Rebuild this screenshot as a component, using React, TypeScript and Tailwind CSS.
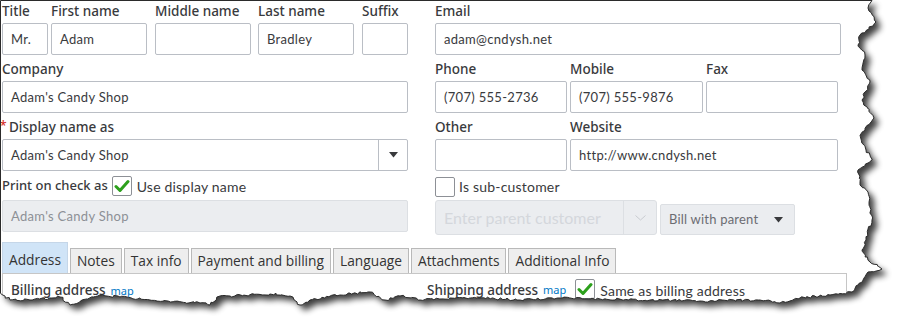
import { useMemo } from "react";

const labelCls =
  "block h-[23px] pt-[2px] font-['Noto_Sans',sans-serif] text-[13.5px] leading-[18px] font-medium text-[#393a3d]";
const inputCls =
  "h-[32px] rounded-[2px] border border-[#babec5] bg-white px-[8px] text-[13px] tracking-[0.3px] leading-[30px] text-[#393a3d]";

function Field({ label, value, w, className = "" }: { label: string; value?: string; w: string; className?: string }) {
  return (
    <div className={className}>
      <span className={labelCls}>{label}</span>
      <div className={`${inputCls} ${w}`}>{value}</div>
    </div>
  );
}

function CheckBox({ checked }: { checked?: boolean }) {
  return (
    <span className="inline-flex h-[20px] w-[20px] shrink-0 items-center justify-center rounded-[2px] border border-[#8d9096] bg-white">
      {checked && (
        <svg width="16" height="14" viewBox="0 0 16 14">
          <path d="M2 7.5 L6 11.5 L14 2.5" fill="none" stroke="#2ca01c" strokeWidth="3" strokeLinecap="round" strokeLinejoin="round" />
        </svg>
      )}
    </span>
  );
}

// deterministic rough edge for the torn paper look
function useTornPath() {
  return useMemo(() => {
    let seed = 7;
    const rnd = () => {
      seed = (seed * 16807) % 2147483647;
      return seed / 2147483647 - 0.5;
    };
    const keys: [number, number][] = [
      [872, 0.5], [868, 8], [876, 22], [860, 35], [858, 45], [865, 55], [862, 70], [870, 82], [862, 100],
      [874, 118], [860, 135], [866, 150], [872, 160], [858, 170], [860, 185], [868, 192], [872, 220],
      [866, 240], [862, 250], [870, 262], [882, 269], [868, 272], [858, 285], [852, 292], [830, 295],
      [800, 298], [780, 303], [760, 300], [700, 301], [650, 300], [600, 299], [560, 298], [520, 300],
      [480, 298], [450, 298], [420, 300], [400, 296], [385, 300], [370, 292], [340, 295], [310, 300],
      [300, 305], [290, 296], [270, 294], [230, 296], [220, 296], [210, 305], [200, 303], [150, 300],
      [120, 297], [100, 295], [70, 305], [60, 297], [30, 300], [10, 300], [0.5, 293],
    ];
    const pts: string[] = ["M0.5 0.5"];
    for (let i = 0; i < keys.length; i++) {
      const [x1, y1] = keys[i];
      if (i === 0) {
        pts.push(`L${x1} ${y1}`);
        continue;
      }
      const [x0, y0] = keys[i - 1];
      const dist = Math.hypot(x1 - x0, y1 - y0);
      const steps = Math.max(1, Math.round(dist / 2.5));
      for (let s = 1; s <= steps; s++) {
        const t = s / steps;
        const jitter = s === steps ? 0 : 1;
        const x = x0 + (x1 - x0) * t + rnd() * 2.4 * jitter;
        const y = y0 + (y1 - y0) * t + rnd() * 2.4 * jitter;
        pts.push(`L${x.toFixed(1)} ${y.toFixed(1)}`);
      }
    }
    pts.push("Z");
    return pts.join(" ");
  }, []);
}

function TornEdge() {
  const p = useTornPath();
  return (
    <svg className="pointer-events-none absolute left-0 top-0" width="904" height="335">
      <defs>
        <filter id="blur" x="-10%" y="-10%" width="120%" height="120%">
          <feGaussianBlur stdDeviation="3" />
        </filter>
        <mask id="outside">
          <rect width="904" height="335" fill="white" />
          <path d={p} fill="black" />
        </mask>
      </defs>
      <path d={`M0 0H904V335H0Z ${p}`} fillRule="evenodd" fill="white" />
      <g mask="url(#outside)">
        <path d={p} transform="translate(5 5)" fill="#000" opacity="0.75" filter="url(#blur)" />
      </g>
      <path d={p} fill="none" stroke="#2b2b2b" strokeWidth="1" />
    </svg>
  );
}

const tabs = ["Address", "Notes", "Tax info", "Payment and billing", "Language", "Attachments", "Additional Info"];

export default function App() {
  return (
    <div className="relative h-[335px] w-[904px] overflow-hidden bg-white font-['Lato',sans-serif]">
      <div className="flex pl-[2px]">
        {/* left column */}
        <div className="w-[406px]">
          <div className="flex">
            <Field label="Title" value="Mr." w="w-[46px]" />
            <Field label="First name" value="Adam" w="w-[96px]" className="ml-[3px]" />
            <Field label="Middle name" w="w-[96px]" className="ml-[8px]" />
            <Field label="Last name" value="Bradley" w="w-[96px]" className="ml-[7px]" />
            <Field label="Suffix" w="w-[46px]" className="ml-[8px]" />
          </div>
          <Field label="Company" value="Adam's Candy Shop" w="w-[406px]" className="mt-[3px]" />
          <div className="mt-[3px]">
            <span className={labelCls}>
              <span className="absolute -ml-[2px] mt-[-1px] text-[12px] text-[#d52b1e]">*</span>
              <span className="ml-[7px]">Display name as</span>
            </span>
            <div className="flex h-[32px] w-[406px] rounded-[2px] border border-[#babec5] text-[13px] tracking-[0.3px] text-[#393a3d]">
              <div className="flex-1 px-[8px] leading-[30px]">Adam's Candy Shop</div>
              <div className="flex w-[29px] items-center justify-center border-l border-[#babec5]">
                <svg width="9" height="6" viewBox="0 0 9 6">
                  <path d="M0 0H9L4.5 5.5Z" fill="#393a3d" />
                </svg>
              </div>
            </div>
          </div>
          <div className="flex h-[29px] items-center gap-[4px] pt-[1px] text-[14px] tracking-[0.2px] text-[#393a3d]">
            <span className="font-['Noto_Sans',sans-serif] text-[13px] font-medium tracking-normal">Print on check as</span>
            <CheckBox checked />
            <span className="ml-[1px]">Use display name</span>
          </div>
          <div className="h-[32px] w-[406px] rounded-[2px] border border-[#dcdfe3] bg-[#ebedf0] px-[8px] text-[13px] tracking-[0.3px] leading-[30px] text-[#8d9096]">
            Adam's Candy Shop
          </div>
        </div>

        {/* right column */}
        <div className="ml-[27px] w-[406px]">
          <Field label="Email" value="adam@cndysh.net" w="w-[406px]" />
          <div className="mt-[3px] flex">
            <Field label="Phone" value="(707) 555-2736" w="w-[132px]" />
            <Field label="Mobile" value="(707) 555-9876" w="w-[133px]" className="ml-[3px]" />
            <Field label="Fax" w="w-[132px]" className="ml-[3px]" />
          </div>
          <div className="mt-[3px] flex">
            <Field label="Other" w="w-[132px]" />
            <Field label="Website" value="http://www.cndysh.net" w="w-[268px]" className="ml-[3px]" />
          </div>
          <div className="flex h-[29px] items-center gap-[4px] pt-[2px] text-[14px] tracking-[0.2px] text-[#393a3d]">
            <CheckBox />
            <span>Is sub-customer</span>
          </div>
          <div className="flex items-start">
            <div className="flex h-[35px] w-[222px] rounded-[3px] border border-[#dcdfe3] bg-[#ebedf0]">
              <div className="flex-1 px-[8px] text-[16px] leading-[33px] text-[#d4d7dc]">Enter parent customer</div>
              <div className="flex w-[33px] items-center justify-center border-l border-[#dcdfe3]">
                <svg width="11" height="6" viewBox="0 0 11 6">
                  <path d="M0.5 0.5L5.5 5L10.5 0.5" fill="none" stroke="#c8cbd0" strokeWidth="1" />
                </svg>
              </div>
            </div>
            <div className="ml-[3px] mt-[4px] flex h-[31px] w-[135px] items-center justify-between rounded-[2px] border border-[#dcdfe3] bg-[#ebedf0] pl-[8px] pr-[11px] text-[13px] tracking-[0.2px] text-[#6b6c72]">
              <span>Bill with parent</span>
              <svg width="9" height="6" viewBox="0 0 9 6">
                <path d="M0 0H9L4.5 5.5Z" fill="#393a3d" />
              </svg>
            </div>
          </div>
        </div>
      </div>

      {/* tabs */}
      <div className="mt-[7px] flex items-end gap-[2px] pl-[2px] font-['Open_Sans',sans-serif] text-[13.75px] text-[#333]">
        {tabs.map((t, i) => (
          <div
            key={t}
            className={
              i === 0
                ? "flex h-[31px] items-center border border-b-0 border-[#c5d6e8] bg-[#d0e4f7] px-[6px] pt-[4px]"
                : "flex h-[25px] items-center border border-b-0 border-[#b9b9b9] bg-[#eeeeee] px-[6px]"
            }
          >
            {t}
          </div>
        ))}
      </div>
      <div className="ml-[2px] h-[40px] w-[845px] border border-[#c6c6c6] font-['Lato',sans-serif]">
        <div className="flex items-center pt-[5px] text-[14px] text-[#393a3d]">
          <div className="flex w-[424px] items-baseline pl-[8px] font-['Noto_Sans',sans-serif]">
            <span className="text-[13.5px] font-medium">Billing address</span>
            <span className="ml-[5px] text-[11px] text-[#0077c5]">map</span>
          </div>
          <div className="flex items-center">
            <span className="font-['Noto_Sans',sans-serif] text-[13.5px] font-medium">Shipping address</span>
            <span className="ml-[5px] font-['Noto_Sans',sans-serif] text-[11px] text-[#0077c5]">map</span>
            <span className="ml-[9px]">
              <CheckBox checked />
            </span>
            <span className="ml-[5px] tracking-[0.2px]">Same as billing address</span>
          </div>
        </div>
      </div>

      <TornEdge />
    </div>
  );
}
